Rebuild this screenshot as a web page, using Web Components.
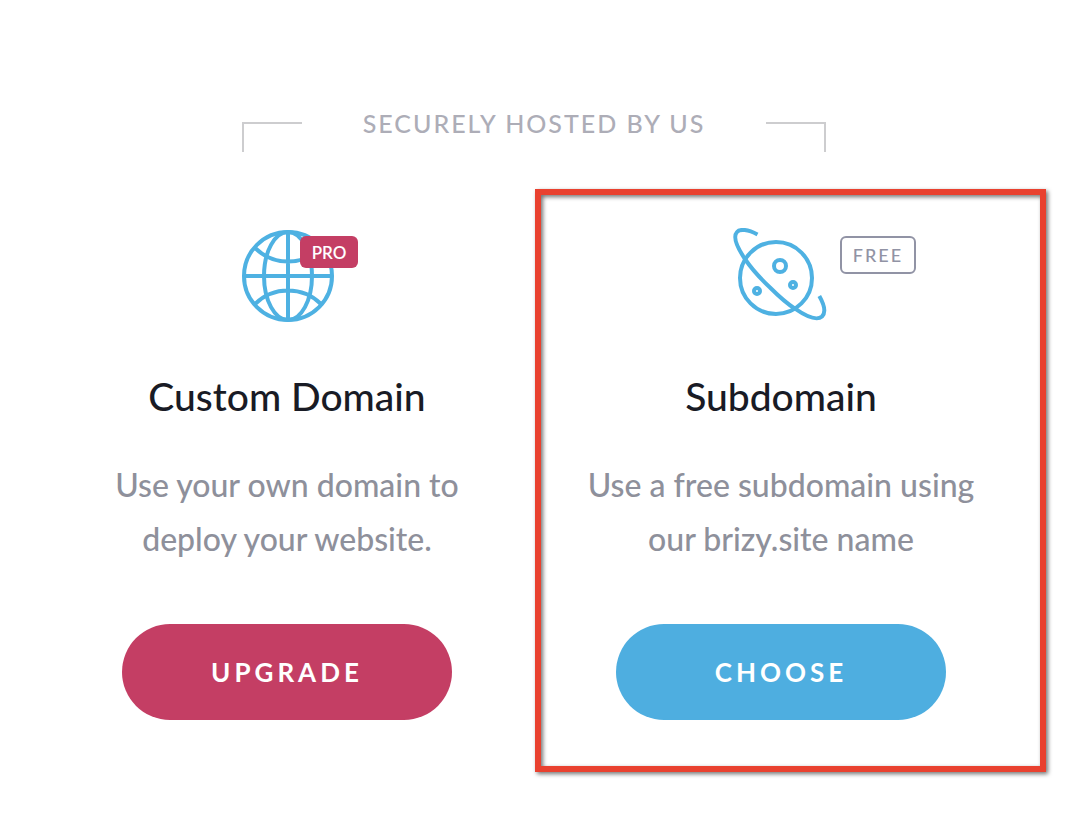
<!DOCTYPE html>
<html lang="en">
<head>
<meta charset="utf-8">
<title>Choose your domain</title>
<style>
  body { margin: 0; background: #fff; font-family: Lato, "Open Sans", sans-serif; }
</style>
</head>
<body>
<hosting-page>
  <hosting-heading slot="heading">SECURELY HOSTED BY US</hosting-heading>
  <plan-card>
    <globe-icon slot="icon"></globe-icon>
    <plan-badge slot="badge" kind="pro">PRO</plan-badge>
    <span slot="title">Custom Domain</span>
    <span slot="text">Use your own domain to<br>deploy your website.</span>
    <pill-button slot="action" kind="pro">UPGRADE</pill-button>
  </plan-card>
  <plan-card highlighted>
    <planet-icon slot="icon"></planet-icon>
    <plan-badge slot="badge" kind="free">FREE</plan-badge>
    <span slot="title">Subdomain</span>
    <span slot="text">Use a free subdomain using<br>our brizy.site name</span>
    <pill-button slot="action">CHOOSE</pill-button>
  </plan-card>
</hosting-page>
<script>
  const define = (name, html) => customElements.define(name, class extends HTMLElement {
    constructor() {
      super();
      this.attachShadow({ mode: 'open' }).innerHTML = html;
    }
  });

  define('hosting-page', `
    <style>
      :host { display: block; padding: 108px 56px 60px 40px; }
      main { display: grid; grid-template-columns: 1fr 1fr; margin-top: 76px; }
    </style>
    <slot name="heading"></slot>
    <main><slot></slot></main>`);

  define('hosting-heading', `
    <style>
      :host { display: block; }
      header { display: flex; align-items: flex-end; justify-content: space-between; max-width: 584px; height: 44px; margin: 0 auto; }
      i { box-sizing: border-box; width: 60px; height: 30px; border: 0 solid #cdcdcf; border-top-width: 2px; }
      .left { border-left-width: 2px; }
      .right { border-right-width: 2px; }
      h1 { align-self: flex-start; margin: 0; font-size: 25px; line-height: 30px; font-weight: 500; letter-spacing: 2px; color: #adadb7; white-space: nowrap; }
    </style>
    <header><i class="left"></i><h1><slot></slot></h1><i class="right"></i></header>`);

  define('plan-card', `
    <style>
      :host { display: block; position: relative; }
      article { display: flex; flex-direction: column; align-items: center; padding-bottom: 52px; text-align: center; }
      .icon { position: relative; width: 96px; height: 96px; }
      h2 { margin: 48px 0 38px; font-size: 39px; line-height: 48px; font-weight: 500; color: #191b25; }
      p { margin: 0 0 58px; font-size: 32px; line-height: 54px; font-weight: 500; color: #8e909b; white-space: nowrap; }
      .frame { display: none; }
      :host([highlighted]) .frame {
        display: block; position: absolute; inset: -39px -18px 0 1px;
        border: 6px solid #e9412f; pointer-events: none;
        filter: drop-shadow(2px 2px 2px rgba(0, 0, 0, .55));
      }
    </style>
    <article>
      <div class="icon"><slot name="icon"></slot><slot name="badge"></slot></div>
      <h2><slot name="title"></slot></h2>
      <p><slot name="text"></slot></p>
      <slot name="action"></slot>
    </article>
    <div class="frame"></div>`);

  define('plan-badge', `
    <style>
      :host { position: absolute; top: 8px; box-sizing: border-box; display: flex; align-items: center; justify-content: center; border-radius: 6px; }
      :host([kind="pro"]) { left: 61px; width: 58px; height: 32px; background: #c43e64; color: #fff; font-size: 17px; font-weight: 600; }
      :host([kind="free"]) { left: 107px; width: 76px; height: 38px; border: 2px solid #9193a5; color: #9193a5; font-size: 18px; font-weight: 500; letter-spacing: 2px; }
    </style>
    <slot></slot>`);

  define('pill-button', `
    <style>
      :host { display: block; }
      button { display: block; width: 330px; height: 96px; border: 0; border-radius: 48px; padding: 0; background: #4eaee0; color: #fff; font: 700 26px/32px Lato, "Open Sans", sans-serif; letter-spacing: 4px; cursor: pointer; }
      :host([kind="pro"]) button { background: #c43e64; }
    </style>
    <button type="button"><slot></slot></button>`);

  const iconStyle = `<style>
      :host { display: block; }
      svg { display: block; width: 96px; height: 96px; fill: none; stroke: #4eb1e2; stroke-width: 4; }
    </style>`;

  define('globe-icon', iconStyle + `
    <svg viewBox="0 0 96 96" aria-hidden="true">
      <circle cx="49" cy="48" r="44"/>
      <ellipse cx="49" cy="48" rx="24" ry="44"/>
      <path d="M49 4v88M5 48h88M16 20a47 47 0 0 0 66 0M16 76a47 47 0 0 1 66 0"/>
    </svg>`);

  define('planet-icon', iconStyle + `
    <svg viewBox="0 0 96 96" aria-hidden="true">
      <circle cx="43" cy="50" r="36"/>
      <circle cx="47" cy="38" r="6"/>
      <circle cx="60" cy="57" r="3"/>
      <circle cx="24" cy="63" r="3"/>
      <path d="M24.5 6.5C15 1.5 7 .5 4 4C-.5 9 4.5 20 12 31C18 40 28 51 37 59.5C45 67.5 53 75 62 80.7C74 89 84 93 89 88.5C92.5 85 92 78 86.3 68"/>
    </svg>`);
</script>
</body>
</html>
